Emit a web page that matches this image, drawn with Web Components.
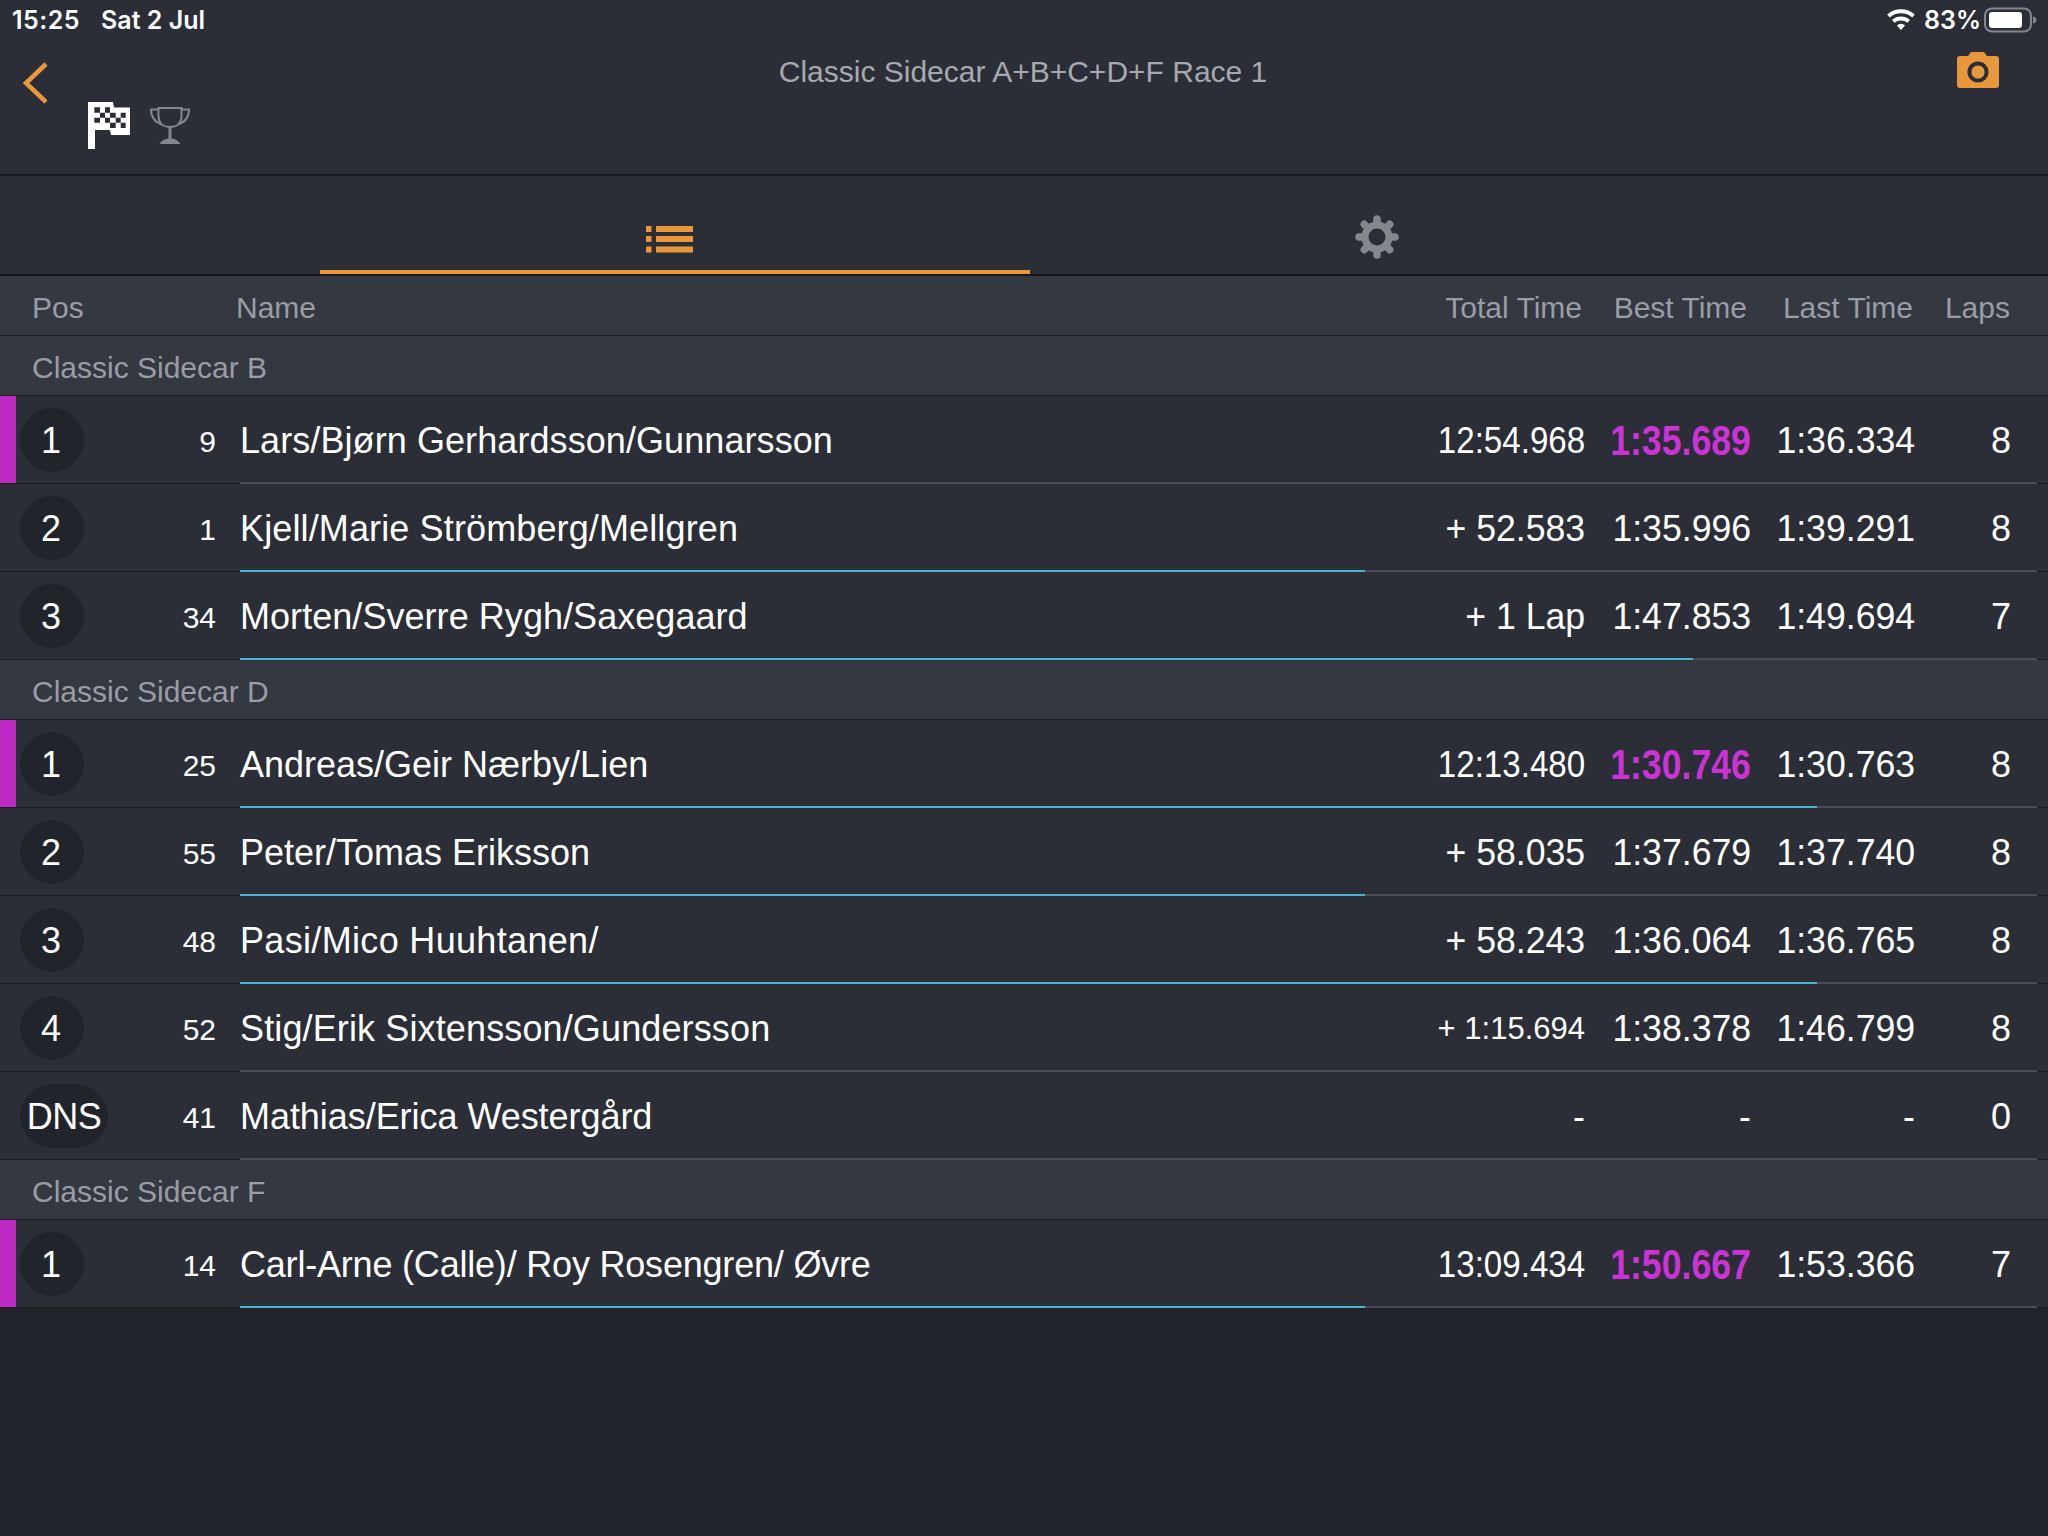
<!DOCTYPE html>
<html>
<head>
<meta charset="utf-8">
<title>Results</title>
<style>
    html, body { margin: 0; height: 100%; background: #20232a; }
    body { font-family: "Liberation Sans", Arial, sans-serif; color: #fff; width: 2048px; height: 1536px; overflow: hidden; }
</style>
</head>
<body>
<race-nav title-text="Classic Sidecar A+B+C+D+F Race 1"></race-nav>
<race-tabs></race-tabs>
<race-header></race-header>
<race-section>Classic Sidecar B</race-section>
<race-row class-leader pos="1" num="9" name="Lars/Bjørn Gerhardsson/Gunnarsson" fit="0.08" total="12:54.968" best="1:35.689" last="1:36.334" laps="8" bar="0"></race-row>
<race-row pos="2" num="1" name="Kjell/Marie Strömberg/Mellgren" fit="0.13" total="+ 52.583" best="1:35.996" last="1:39.291" laps="8" bar="1125"></race-row>
<race-row pos="3" num="34" name="Morten/Sverre Rygh/Saxegaard" fit="0.05" total="+ 1 Lap" best="1:47.853" last="1:49.694" laps="7" bar="1453"></race-row>
<race-section>Classic Sidecar D</race-section>
<race-row class-leader pos="1" num="25" name="Andreas/Geir Nærby/Lien" total="12:13.480" best="1:30.746" last="1:30.763" laps="8" bar="1577"></race-row>
<race-row pos="2" num="55" name="Peter/Tomas Eriksson" total="+ 58.035" best="1:37.679" last="1:37.740" laps="8" bar="1125"></race-row>
<race-row pos="3" num="48" name="Pasi/Mico Huuhtanen/" fit="0.33" total="+ 58.243" best="1:36.064" last="1:36.765" laps="8" bar="1577"></race-row>
<race-row pos="4" num="52" name="Stig/Erik Sixtensson/Gundersson" fit="0.13" total="+ 1:15.694" small-total best="1:38.378" last="1:46.799" laps="8" bar="0"></race-row>
<race-row pos="DNS" num="41" name="Mathias/Erica Westergård" fit="-0.05" total="-" best="-" last="-" laps="0" bar="0"></race-row>
<race-section>Classic Sidecar F</race-section>
<race-row class-leader pos="1" num="14" name="Carl-Arne (Calle)/ Roy Rosengren/ Øvre" fit="-0.2" total="13:09.434" best="1:50.667" last="1:53.366" laps="7" bar="1125"></race-row>

<script>
class RaceNav extends HTMLElement {
    constructor() {
        super();
        this.attachShadow({ mode: 'open' });
    }

    connectedCallback() {
        this.shadowRoot.innerHTML = `
            <style>
                :host { display: block; height: 174px; background: #2b2e36; border-bottom: 2px solid #17191e; position: relative; }
                .status { display: flex; justify-content: space-between; align-items: center; height: 40px; padding: 0 10px 0 12px; font-family: Inter, "Liberation Sans", sans-serif; font-size: 25px; font-weight: 600; }
                .status div { display: flex; align-items: center; }
                .time { letter-spacing: .5px; }
                .date { margin-left: 21px; }
                .batt { margin-left: 3px; }
                .wifi { margin-right: 9px; }
                .nav { display: flex; height: 134px; position: relative; }
                .back { margin: 21px 0 0 22px; }
                .icons { display: flex; align-items: flex-start; position: absolute; left: 88px; top: 61px; gap: 20px; }
                .title { position: absolute; left: 0; right: 2px; top: 12px; text-align: center; font-size: 30px; line-height: 40px; color: #a6a9af; }
                .cam { position: absolute; left: 1957px; top: 12px; }
            </style>
            <div class="status">
                <div><span class="time">15:25</span><span class="date">Sat 2 Jul</span></div>
                <div>
                    <svg class="wifi" width="28" height="22" viewBox="0 0 28 22"><path d="M14 21l-4-4.600a6 6 0 0 1 8 0zM7.600 13.800L5 10.900a13.500 13.500 0 0 1 18 0l-2.600 2.900a9.700 9.700 0 0 0-12.800 0zM2.800 8.400L.2 5.500a20.800 20.800 0 0 1 27.600 0l-2.600 2.900a17 17 0 0 0-22.400 0z" fill="#fff"/></svg>
                    <span>83%</span>
                    <svg class="batt" width="54" height="26" viewBox="0 0 54 26"><rect x="1" y="1.500" width="46" height="23" rx="7" fill="none" stroke="#83868c" stroke-width="2"/><rect x="5" y="5" width="33" height="16" rx="3" fill="#fff"/><path d="M49 9.500c2.500.6 3.500 2 3.500 3.500s-1 2.900-3.500 3.500z" fill="#83868c"/></svg>
                </div>
            </div>
            <div class="nav">
                <svg class="back" width="28" height="44" viewBox="0 0 28 44"><path d="M24 3L4 22l20 19" fill="none" stroke="#e8973a" stroke-width="4.500"/></svg>
                <div class="icons">
                    <svg width="42" height="48" viewBox="0 0 42 48"><path fill="#fff" d="M0 1h25l1 5.500h16V34H23l-1-5H7v19H0z"/><path fill="#2b2e36" d="M6.300 6.300H12v5.400H6.300zM17 6.300h5v5.400h-5zM12 11.700h5v5H12zM22 11.700h5.700v5H22zM32.700 11.700h5v5h-5zM6.300 16.700H12v5H6.300zM17 16.700h5v5h-5zM27.700 16.700h5v5h-5zM22 21.700h5.700V27H22zM32.700 21.700h5V27h-5z"/></svg>
                    <svg width="40" height="38" viewBox="0 0 40 38" style="margin-top:5px"><g fill="none" stroke="#83868c" stroke-width="2"><path d="M8.500 2h23v8c0 7-4.500 11-11.500 11S8.500 17 8.500 10z"/><path d="M8.500 3.500H1c0 7 3.500 12.500 11 15M31.500 3.500H39c0 7-3.500 12.500-11 15"/></g><path fill="#83868c" d="M18.500 21h3v11.500c4 .6 7 2 9 5.500h-21c2-3.500 5-4.900 9-5.500z"/></svg>
                </div>
                <div class="title">${this.getAttribute('title-text')}</div>
                <svg class="cam" width="42" height="36" viewBox="0 0 42 36"><path fill="#e8973a" d="M11 4l3-4h13l3 4h9a3 3 0 0 1 3 3v26a3 3 0 0 1-3 3H3a3 3 0 0 1-3-3V7a3 3 0 0 1 3-3z"/><circle cx="21" cy="20" r="8.600" fill="none" stroke="#2b2e36" stroke-width="4"/></svg>
            </div>
        `;
    }
}

class RaceTabs extends HTMLElement {
    constructor() {
        super();
        this.attachShadow({ mode: 'open' });
    }

    connectedCallback() {
        this.shadowRoot.innerHTML = `
            <style>
                :host { display: block; height: 98px; background: #2b2e36; border-bottom: 2px solid #17191e; }
                .wrap { display: flex; height: 100%; padding-left: 320px; }
                .tab { width: 710px; display: flex; justify-content: center; align-items: flex-start; box-sizing: border-box; padding-right: 12px; }
                .tab.on { border-bottom: 4px solid #e8973a; }
                .tab.off { padding-right: 17px; }
                .list { margin-top: 49px; }
                .gear { margin-top: 39px; }
            </style>
            <div class="wrap">
                <div class="tab on">
                    <svg class="list" width="48" height="29" viewBox="0 0 48 29"><path fill="#e8973a" d="M1 1h5.500v6H1zM11 1h37v6H11zM1 11h5.500v6H1zM11 11h37v6H11zM1 21.500h5.500v6H1zM11 21.500h37v6H11z"/></svg>
                </div>
                <div class="tab off">
                    <svg class="gear" width="44" height="44" viewBox="0 0 44 44"><g stroke="#84878c" stroke-width="7.500" stroke-linecap="round"><path d="M22 4v36M4 22h36M9.300 9.300l25.400 25.400M34.700 9.300L9.300 34.700"/></g><circle cx="22" cy="22" r="15.500" fill="#84878c"/><circle cx="22" cy="22" r="8.500" fill="#2b2e36"/></svg>
                </div>
            </div>
        `;
    }
}

class RaceHeader extends HTMLElement {
    constructor() {
        super();
        this.attachShadow({ mode: 'open' });
    }

    connectedCallback() {
        this.shadowRoot.innerHTML = `
            <style>
                :host { display: block; height: 59px; background: #343841; border-bottom: 1px solid #1d1f25; color: #9a9da5; font-size: 30px; }
                .row { display: flex; align-items: center; height: 100%; box-sizing: border-box; padding: 5px 38px 0 32px; }
                .pos { width: 204px; }
                .name { flex: 1; }
                .c { white-space: nowrap; text-align: right; }
                .best { width: 165px; }
                .last { width: 166px; }
                .laps { width: 97px; }
            </style>
            <div class="row">
                <div class="pos">Pos</div>
                <div class="name">Name</div>
                <div class="c total">Total Time</div>
                <div class="c best">Best Time</div>
                <div class="c last">Last Time</div>
                <div class="c laps">Laps</div>
            </div>
        `;
    }
}

class RaceSection extends HTMLElement {
    constructor() {
        super();
        this.attachShadow({ mode: 'open' });
    }

    connectedCallback() {
        this.shadowRoot.innerHTML = `
            <style>
                :host { display: flex; align-items: center; height: 59px; box-sizing: content-box; padding-left: 32px; background: #343841; border-bottom: 1px solid #1d1f25; color: #9a9da5; font-size: 30px; }
                div { padding-top: 5px; }
            </style>
            <div><slot></slot></div>
        `;
    }
}

class RaceRow extends HTMLElement {
    constructor() {
        super();
        this.attachShadow({ mode: 'open' });
    }

    connectedCallback() {
        const get = (k) => this.getAttribute(k);
        const leader = this.hasAttribute('class-leader');
        const bar = parseInt(get('bar'));
        this.shadowRoot.innerHTML = `
            <style>
                :host { display: block; height: 88px; background: #2b2e36; position: relative; box-sizing: border-box; border-bottom: 1px solid #1d1f25; }
                .row { display: flex; align-items: center; height: 87px; }
                .mark { width: 16px; height: 100%; flex: none; background: ${leader ? '#c02ac4' : 'transparent'}; }
                .pos { width: 64px; display: flex; margin-left: 4px; flex: none; }
                .circle { flex: none; width: 64px; height: 64px; box-sizing: border-box; border-radius: 32px; background: #21242b; display: flex; align-items: center; justify-content: center; font-size: 36px; padding: 2px 2px 0 0; }
                .circle.wide { width: 88px; padding-right: 0; letter-spacing: -0.5px; }
                .num { width: 132px; margin-right: 24px; flex: none; text-align: right; font-size: 30px; padding-top: 4px; }
                .name { flex: 1; font-size: 36px; white-space: nowrap; padding-top: 3px; letter-spacing: ${get('fit') || 0}px; }
                .c { display: flex; justify-content: flex-end; font-size: 36px; flex: none; padding-top: 3px; }
                .c span { display: block; white-space: nowrap; transform: scaleX(.99); transform-origin: right center; }
                .total { width: 180px; }
                .total.squeeze span { transform: scaleX(.92); }
                .best { width: 166px; }
                .last { width: 164px; }
                .laps { width: 96px; margin-right: 37px; }
                .best.hot span { color: #cc33d6; font-weight: 700; transform: scaleX(.848); font-size: 42px; }
                .total.small { font-size: 31px; }
                .total.small span { transform: none; }
                .track { position: absolute; left: 240px; right: 11px; bottom: -1px; height: 2px; background: #4a4d55; }
                .fill { height: 100%; background: #4ab5cc; width: ${bar}px; }
                .laps span { transform: none; }
            </style>
            <div class="row">
                <div class="mark"></div>
                <div class="pos"><div class="circle ${get('pos').length > 1 ? 'wide' : ''}">${get('pos')}</div></div>
                <div class="num">${get('num')}</div>
                <div class="name">${get('name')}</div>
                <div class="c total ${this.hasAttribute('small-total') ? 'small' : ''} ${leader ? 'squeeze' : ''}"><span>${get('total')}</span></div>
                <div class="c best ${leader ? 'hot' : ''}"><span>${get('best')}</span></div>
                <div class="c last"><span>${get('last')}</span></div>
                <div class="c laps"><span>${get('laps')}</span></div>
            </div>
            <div class="track"><div class="fill"></div></div>
        `;
    }
}

customElements.define('race-nav', RaceNav);
customElements.define('race-tabs', RaceTabs);
customElements.define('race-header', RaceHeader);
customElements.define('race-section', RaceSection);
customElements.define('race-row', RaceRow);
</script>
</body>
</html>
